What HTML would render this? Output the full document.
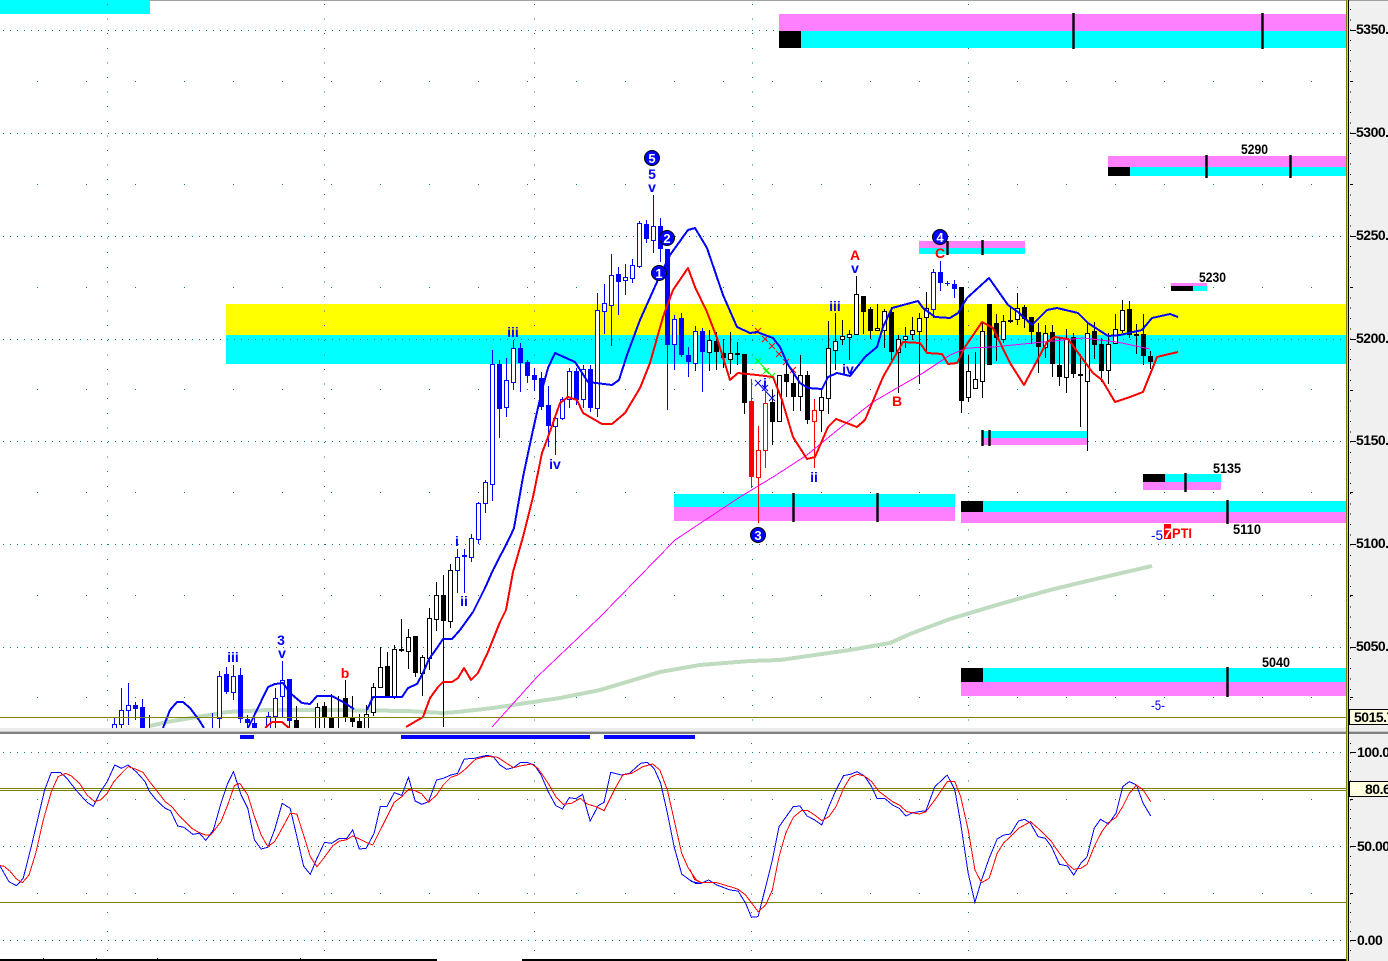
<!DOCTYPE html>
<html>
<head>
<meta charset="utf-8">
<style>
html,body{margin:0;padding:0;background:#fff;overflow:hidden}
svg{display:block}
text{font-family:"Liberation Sans",sans-serif}
.ax{font-size:14px;font-weight:bold;letter-spacing:-.5px;fill:#000}
.lb{font-size:14px;font-weight:bold;fill:#000}
.w{font-size:14px;font-weight:bold;text-anchor:middle;fill:#0000ff}
.r{fill:#ff0000}
.n{font-size:13px;font-weight:bold;text-anchor:middle;fill:#fff}
polyline{shape-rendering:crispEdges}
</style>
</head>
<body>
<svg width="1388" height="961" viewBox="0 0 1388 961" xmlns="http://www.w3.org/2000/svg">
<defs><clipPath id="c"><rect x="0" y="0" width="1346" height="728"/></clipPath></defs>
<rect width="1388" height="961" fill="#fff"/>
<rect x="1349" y="0" width="39" height="961" fill="#f0f0f0"/>
<rect x="0" y="0" width="1388" height="1" fill="#a0a0a0"/>

<!-- zones beneath grid -->
<g shape-rendering="crispEdges">
<rect x="0" y="0" width="150" height="14" fill="#00ffff"/>
<rect x="226" y="304" width="1120" height="31" fill="#ffff00"/>
<rect x="226" y="335" width="1120" height="29" fill="#00ffff"/>
</g>

<!-- grid -->
<g stroke="#008080" stroke-width="1" fill="none" shape-rendering="crispEdges">
<g stroke-dasharray="1 6">
<path d="M3 30.5H1346M3 133.5H1346M3 236.5H1346M3 339.5H1346M3 441.5H1346M3 544.5H1346M3 647.5H1346M3 752.5H1346M3 846.5H1346M3 940.5H1346"/>
</g>
<g stroke-dasharray="1 48">
<path d="M37 81.5H1346M37 184.5H1346M37 287.5H1346M37 389.5H1346M37 492.5H1346M37 595.5H1346M37 697.5H1346M37 799.5H1346M37 893.5H1346"/>
</g>
<g stroke-dasharray="1 13.6">
<path d="M107.5 4V728M324.5 4V728M534.5 4V728M752.5 4V728M968.5 4V728"/>
</g>
<g stroke-dasharray="1 17.8">
<path d="M107.5 743V958M324.5 743V958M534.5 743V958M751.5 743V958M968.5 743V958"/>
</g>
</g>

<!-- bands -->
<g shape-rendering="crispEdges">
<rect x="779" y="14" width="567" height="17" fill="#ff80ff"/>
<rect x="779" y="31" width="567" height="17" fill="#00ffff"/>
<rect x="779" y="31" width="22" height="17" fill="#000"/>
<rect x="1108" y="156" width="238" height="11" fill="#ff80ff"/>
<rect x="1108" y="167" width="238" height="9" fill="#00ffff"/>
<rect x="1108" y="167" width="22" height="9" fill="#000"/>
<rect x="919" y="241" width="106" height="7" fill="#ff80ff"/>
<rect x="919" y="248" width="106" height="6" fill="#00ffff"/>
<rect x="1171" y="283" width="36" height="3" fill="#ff80ff"/>
<rect x="1171" y="286" width="36" height="5" fill="#00ffff"/>
<rect x="1171" y="286" width="22" height="5" fill="#000"/>
<rect x="674" y="494" width="281" height="13" fill="#00ffff"/>
<rect x="674" y="507" width="281" height="14" fill="#ff80ff"/>
<rect x="983" y="431" width="104" height="7" fill="#00ffff"/>
<rect x="983" y="438" width="104" height="7" fill="#ff80ff"/>
<rect x="1143" y="474" width="78" height="8" fill="#00ffff"/>
<rect x="1143" y="482" width="78" height="8" fill="#ff80ff"/>
<rect x="1143" y="474" width="22" height="8" fill="#000"/>
<rect x="961" y="501" width="385" height="11" fill="#00ffff"/>
<rect x="961" y="512" width="385" height="11" fill="#ff80ff"/>
<rect x="961" y="501" width="22" height="11" fill="#000"/>
<rect x="961" y="668" width="385" height="14" fill="#00ffff"/>
<rect x="961" y="682" width="385" height="14" fill="#ff80ff"/>
<rect x="961" y="668" width="22" height="14" fill="#000"/>
</g>
<path fill="none" stroke="#000" stroke-width="2.4" d="M1073.5 13V49M1262.5 13V49M1206.5 155V178M1290.5 155V178M982.5 240V255M947.5 241V255M793.5 493V522M877.5 493V522M982.5 430V446M989.5 430V446M1185.5 473V492M1227.5 500V524M1227.5 667V697"/>

<g clip-path="url(#c)">
<!-- green MA -->
<polyline fill="none" stroke="#c0dcc0" stroke-width="4" points="150,726 167,722 197,717 227,712 267,710 333,710 407,711 443,713 457,712 493,708 513,705 560,698 600,690 660,672 700,665 750,661 780,660 850,650 890,643 910,634 950,619 1000,604 1050,590 1100,578 1152,566"/>

<g fill="none" shape-rendering="crispEdges">
<!-- blue candles -->
<path stroke="#0000ff" d="M114.5 718V728M121.5 688V728M128.5 683V725M135.5 702V720M142.5 699V728M149.5 715V728M212.5 713V728M219.5 671V728M226.5 667V694M233.5 665V700M240.5 668V723M247.5 715V728M254.5 718V728M268.5 712V728M275.5 688V728M282.5 661V718M289.5 679V728M457.5 549V593M464.5 549V593M471.5 534V562M478.5 502V544M485.5 480V513M492.5 350V501M499.5 360V438M506.5 358V417M513.5 340V390M520.5 343V392M527.5 360V383M534.5 368V391M541.5 372V410M548.5 386V447M555.5 414V455M562.5 397V420M569.5 368V408M576.5 368V405M583.5 365V408M590.5 365V412M597.5 293V417M604.5 284V334M611.5 254V346M618.5 267V315M625.5 264V295M632.5 259V283M639.5 221V268M646.5 220V243M653.5 195V253M660.5 218V262M667.5 249V410M674.5 315V370M681.5 313V357M688.5 347V377M695.5 326V371M702.5 328V392M933.5 269V318M940.5 261V291M947.5 281V286M954.5 280V298"/>
<path stroke="#0000ff" fill="#fff" d="M112.5 724.5h4V730h-4zM119.5 710.5h4V724.5h-4zM126.5 705.5h4V710.5h-4zM217.5 676.5h4V718.5h-4zM231.5 676.5h4V692.5h-4zM266.5 716.5h4V730h-4zM273.5 698.5h4V716.5h-4zM280.5 680.5h4V696.5h-4zM455.5 557.5h4V570.5h-4zM469.5 538.5h4V557.5h-4zM476.5 503.5h4V539.5h-4zM483.5 482.5h4V503.5h-4zM490.5 364.5h4V484.5h-4zM504.5 380.5h4V407.5h-4zM511.5 348.5h4V382.5h-4zM553.5 418.5h4V426.5h-4zM560.5 399.5h4V418.5h-4zM567.5 371.5h4V399.5h-4zM581.5 369.5h4V399.5h-4zM595.5 310.5h4V408.5h-4zM602.5 303.5h4V311.5h-4zM609.5 275.5h4V305.5h-4zM623.5 277.5h4V280.5h-4zM630.5 265.5h4V278.5h-4zM637.5 223.5h4V266.5h-4zM651.5 226.5h4V240.5h-4zM672.5 319.5h4V344.5h-4zM693.5 331.5h4V363.5h-4zM931.5 272.5h4V309.5h-4z"/>
<path stroke="#0000ff" stroke-width="5" d="M135.5 705V709M142.5 707V730M226.5 674V692M240.5 675V719M247.5 719V723M254.5 723V730M289.5 679V721M464.5 555V557M499.5 364V409M520.5 348V363M527.5 362V376M534.5 375V380M541.5 378V407M548.5 405V426M576.5 371V400M590.5 369V408M618.5 274V282M646.5 224V239M660.5 226V249M667.5 249V345M681.5 318V355M688.5 355V362M702.5 331V352M940.5 272V283M947.5 283V284M954.5 284V289"/>

<!-- black candles -->
<path stroke="#000" d="M296.5 706V728M317.5 703V728M324.5 702V728M331.5 694V728M338.5 696V728M345.5 680V722M352.5 696V727M359.5 714V728M366.5 705V728M373.5 683V716M380.5 647V687M387.5 652V698M394.5 645V699M401.5 619V652M408.5 629V669M415.5 636V677M422.5 655V696M429.5 608V670M436.5 582V631M443.5 575V727M450.5 564V628M709.5 330V371M716.5 332V370M723.5 339V368M730.5 332V374M737.5 342V365M744.5 354V414M772.5 390V445M779.5 375V421M786.5 360V397M793.5 370V411M800.5 355V411M807.5 371V424M821.5 390V432M828.5 321V414M835.5 313V370M842.5 320V345M849.5 330V360M856.5 276V334M863.5 296V334M870.5 307V339M877.5 304V330M884.5 309V348M891.5 307V360M898.5 335V393M905.5 327V348M912.5 317V340M919.5 313V384M926.5 292V353M961.5 287V413M968.5 355V402M975.5 352V388M982.5 322V398M989.5 304V365M996.5 314V361M1003.5 315V343M1010.5 307V323M1017.5 293V325M1024.5 305V328M1031.5 317V344M1038.5 323V373M1045.5 325V358M1052.5 325V377M1059.5 337V386M1066.5 329V393M1073.5 333V378M1080.5 354V427M1087.5 323V451M1094.5 322V359M1101.5 338V382M1108.5 333V384M1115.5 314V343M1122.5 300V333M1129.5 301V338M1136.5 324V354M1143.5 314V365M1150.5 351V369"/>
<path stroke="#000" fill="#fff" d="M315.5 707.5h4V730h-4zM364.5 714.5h4V730h-4zM371.5 687.5h4V712.5h-4zM378.5 667.5h4V687.5h-4zM392.5 649.5h4V697.5h-4zM406.5 637.5h4V651.5h-4zM420.5 657.5h4V673.5h-4zM427.5 618.5h4V658.5h-4zM434.5 595.5h4V619.5h-4zM448.5 570.5h4V621.5h-4zM707.5 340.5h4V352.5h-4zM728.5 353.5h4V359.5h-4zM777.5 375.5h4V421.5h-4zM798.5 375.5h4V396.5h-4zM819.5 397.5h4V410.5h-4zM826.5 348.5h4V398.5h-4zM833.5 341.5h4V350.5h-4zM840.5 336.5h4V339.5h-4zM847.5 334.5h4V337.5h-4zM854.5 294.5h4V334.5h-4zM875.5 328.5h4V330.5h-4zM882.5 311.5h4V330.5h-4zM896.5 339.5h4V352.5h-4zM903.5 336.5h4V339.5h-4zM910.5 330.5h4V334.5h-4zM917.5 318.5h4V331.5h-4zM924.5 308.5h4V317.5h-4zM966.5 371.5h4V397.5h-4zM973.5 379.5h4V388.5h-4zM980.5 331.5h4V381.5h-4zM1001.5 321.5h4V339.5h-4zM1015.5 308.5h4V319.5h-4zM1043.5 333.5h4V347.5h-4zM1064.5 338.5h4V377.5h-4zM1085.5 333.5h4V381.5h-4zM1106.5 344.5h4V370.5h-4zM1113.5 329.5h4V343.5h-4zM1120.5 310.5h4V330.5h-4z"/>
<path stroke="#000" stroke-width="5" d="M296.5 720V730M324.5 706V717M331.5 718V730M345.5 698V717M352.5 718V722M359.5 721V730M387.5 666V698M401.5 649V651M415.5 636V673M443.5 595V621M716.5 341V352M723.5 353V358M737.5 353V355M744.5 354V403M772.5 402V422M786.5 374V382M793.5 383V397M807.5 375V420M863.5 296V312M870.5 309V331M891.5 312V352M961.5 287V401M989.5 304V365M996.5 323V338M1010.5 320V322M1024.5 307V319M1031.5 317V332M1038.5 332V347M1052.5 332V364M1059.5 365V377M1073.5 337V374M1080.5 374V376M1094.5 331V345M1101.5 344V371M1129.5 309V335M1136.5 334V336M1143.5 334V356M1150.5 356V362"/>

<!-- red candles -->
<path stroke="#ff0000" d="M751.5 379V488M758.5 426V523M765.5 392V468M814.5 399V468"/>
<path stroke="#ff0000" fill="#fff" d="M756.5 450.5h4V477.5h-4zM763.5 403.5h4V450.5h-4zM812.5 410.5h4V421.5h-4z"/>
<path stroke="#ff0000" stroke-width="5" d="M751.5 401V477"/>
</g>

<!-- magenta MA -->
<polyline fill="none" stroke="#ff00ff" stroke-width="1" points="492,727 537,677 600,617 675,540 740,497 773,477 807,455 840,428 873,402 897,388 923,373 950,355 967,348 993,347 1033,343 1083,338 1117,342 1150,349"/>

<!-- x marks -->
<path fill="none" stroke="#ff0000" d="M755 328l6 6m0-6l-6 6M762 336l6 6m0-6l-6 6M769 343l6 6m0-6l-6 6M776 351l6 6m0-6l-6 6M783 359l6 6m0-6l-6 6M790 367l6 6m0-6l-6 6"/>
<path fill="none" stroke="#00ff00" d="M755 358l6 6m0-6l-6 6M763 368l6 6m0-6l-6 6M769 373l6 6m0-6l-6 6M758 361L772 376"/>
<path fill="none" stroke="#0000ff" d="M755 380l6 6m0-6l-6 6M762 385l6 6m0-6l-6 6M769 395l6 6m0-6l-6 6M758 383L772 398"/>

<!-- blue MA -->
<g fill="none" stroke="#0000ff" stroke-width="2" stroke-linejoin="round">
<polyline points="163,728 170,710 177,702 183,702 190,708 199,720 204,728"/>
<polyline points="248,728 255,714 268,687 275,684 283,683 290,693 302,703 310,704 317,696 332,696 343,702 354,709"/>
<polyline points="367,710 373,697 387,697 402,697 408,688 417,684 423,673 429,659 437,648 443,639 452,639 460,630 473,612 485,588 493,570 510,537 514,528 523,477 533,430 542,390 548,368 555,353 575,362 588,382 612,385 619,380 627,355 640,320 657,282 670,255 688,230 695,228 707,248 723,295 737,327 750,333 757,332 773,338 780,347 787,363 800,383 808,388 822,389 828,377 837,373 850,376 865,357 877,347 883,327 892,308 918,301 923,308 935,317 950,318 958,313 967,298 989,278 1008,305 1018,312 1032,325 1047,310 1057,308 1078,313 1088,323 1108,336 1120,335 1142,330 1152,318 1170,314 1178,317"/>
</g>
<!-- red MA -->
<g fill="none" stroke="#ff0000" stroke-width="2" stroke-linejoin="round">
<polyline points="265,728 272,722 282,722 289,728"/>
<polyline points="406,727 423,717 430,698 438,687 443,682 452,682 458,678 464,668 471,680 478,673 488,652 500,622 506,610 513,572 523,537 533,497 542,453 548,437 560,403 568,397 577,400 583,413 602,424 612,424 625,413 640,388 650,363 663,317 673,290 688,268 695,287 707,312 717,338 730,380 738,373 757,375 773,377 782,400 793,437 807,459 815,457 828,427 836,419 857,427 865,420 883,377 903,342 920,343 927,353 942,354 948,364 957,363 965,347 982,322 993,328 1010,363 1024,385 1047,342 1055,337 1068,339 1093,373 1102,380 1115,402 1130,397 1143,392 1157,357 1165,355 1178,352"/>
</g>
</g>

<!-- circles -->
<g stroke="#000" stroke-width="1" fill="#0000ff">
<circle cx="652" cy="158" r="7.5"/>
<circle cx="667" cy="238" r="7.5"/>
<circle cx="659" cy="273" r="7.5"/>
<circle cx="940" cy="237" r="7.5"/>
<circle cx="758" cy="535" r="7.5"/>
</g>
<text class="n" x="652" y="163">5</text>
<text class="n" x="667" y="243">2</text>
<text class="n" x="659" y="278">1</text>
<text class="n" x="940" y="242">4</text>
<text class="n" x="758" y="540">3</text>

<!-- wave labels -->
<text class="w" x="233" y="662">iii</text>
<text class="w" x="281" y="645">3</text>
<text class="w" x="282" y="658">v</text>
<text class="w r" x="345" y="678">b</text>
<text class="w" x="457" y="546">i</text>
<text class="w" x="464" y="606">ii</text>
<text class="w" x="513" y="337">iii</text>
<text class="w" x="555" y="469">iv</text>
<text class="w" x="652" y="179">5</text>
<text class="w" x="652" y="192">v</text>
<text class="w r" x="855" y="260">A</text>
<text class="w" x="855" y="273">v</text>
<text class="w" x="835" y="311">iii</text>
<text class="w" x="848" y="374">iv</text>
<text class="w" x="814" y="482">ii</text>
<text class="w r" x="897" y="406">B</text>
<text class="w r" x="940" y="258">C</text>
<text class="w" x="765" y="388">i</text>

<!-- price labels -->
<text class="lb" x="1241" y="154" textLength="27" lengthAdjust="spacingAndGlyphs">5290</text>
<text class="lb" x="1199" y="282" textLength="27" lengthAdjust="spacingAndGlyphs">5230</text>
<text class="lb" x="1213" y="473" textLength="28" lengthAdjust="spacingAndGlyphs">5135</text>
<text class="lb" x="1233" y="534" textLength="28" lengthAdjust="spacingAndGlyphs">5110</text>
<text class="lb" x="1262" y="667" textLength="28" lengthAdjust="spacingAndGlyphs">5040</text>
<text x="1151" y="710" font-size="14" fill="#0000ff" textLength="14" lengthAdjust="spacingAndGlyphs">-5-</text>
<text x="1151" y="540" font-size="14" fill="#0000ff" textLength="12" lengthAdjust="spacingAndGlyphs">-5</text>
<rect x="1164" y="524" width="7" height="15" fill="#ff0000" shape-rendering="crispEdges"/>
<text x="1164" y="538" font-size="14" font-weight="bold" font-style="italic" fill="#fff">7</text>
<text x="1172" y="538" font-size="14" font-weight="bold" fill="#ff0000" textLength="20" lengthAdjust="spacingAndGlyphs">PTI</text>

<!-- bottom bars -->
<g shape-rendering="crispEdges">
<rect x="0" y="728" width="1388" height="3" fill="#ececec"/>
<rect x="0" y="731" width="1388" height="1" fill="#c8c8c8"/>
<rect x="0" y="732" width="1388" height="2" fill="#808080"/>
<rect x="240" y="735" width="14" height="4" fill="#0000ff"/>
<rect x="401" y="735" width="189" height="4" fill="#0000ff"/>
<rect x="604" y="735" width="91" height="4" fill="#0000ff"/>
<path fill="none" stroke="#808000" d="M0 717.5H1347M0 788.5H1347M0 790.5H1347M0 902.5H1347"/>
</g>

<!-- stochastic -->
<g fill="none" stroke-width="1">
<g transform="translate(0,740) scale(.44643,.33333)">
<polyline vector-effect="non-scaling-stroke" stroke="#0000ff" points="0,378 20,425 37,437 52,415 70,320 100,150 115,97 135,97 150,115 170,150 195,187 209,199 225,155 240,125 257,75 272,85 287,75 305,95 325,125 335,155 350,180 370,205 382,212 398,258 412,262 432,283 447,280 461,301 478,270 495,190 510,130 523,95 540,165 555,205 570,300 585,327 600,322 615,270 632,190 650,205 665,290 680,378 695,403 710,355 727,307 743,310 760,295 777,295 790,270 805,327 820,325 838,280 852,199 867,199 883,158 900,166 915,112 930,183 945,193 960,185 978,120 993,115 1010,105 1025,100 1040,57 1062,55 1090,46 1105,50 1120,75 1135,88 1150,83 1165,68 1180,67 1197,75 1212,105 1228,155 1245,197 1260,207 1275,173 1290,176 1305,163 1322,243 1340,197 1353,187 1368,97 1392,105 1410,100 1435,70 1450,67 1465,85 1480,130 1495,220 1510,320 1527,402 1550,425 1568,430"/>
<polyline vector-effect="non-scaling-stroke" stroke="#ff0000" points="0,377 8,378 22,393 37,417 50,428 65,405 80,340 97,240 115,155 130,110 147,100 160,108 178,130 195,165 212,185 225,180 240,160 255,125 272,100 287,80 305,88 320,97 335,125 350,150 370,185 385,200 400,225 430,265 445,277 460,285 472,285 495,245 510,195 525,137 537,130 555,165 570,230 585,285 600,320 615,305 632,265 650,220 665,222 680,285 695,350 710,380 725,355 745,318 760,303 775,300 790,288 805,297 820,307 835,315 850,275 867,230 883,187 900,170 915,148 930,152 945,162 960,187 978,165 993,135 1010,112 1025,105 1040,90 1065,58 1090,49 1115,52 1135,70 1150,83 1165,78 1190,72 1205,85 1228,130 1245,170 1262,193 1280,190 1300,175 1315,192 1335,200 1353,212 1378,145 1395,105 1415,100 1440,80 1462,72 1478,90 1495,150 1510,240 1527,340 1542,385 1560,420 1568,425"/>
</g>
<g transform="translate(690,740) scale(.44515,.33333)">
<polyline vector-effect="non-scaling-stroke" stroke="#0000ff" points="0,420 12,430 25,430 42,420 60,435 90,450 108,453 125,490 138,532 153,530 170,440 185,360 200,260 232,200 247,198 263,228 280,240 296,255 312,200 328,150 345,107 360,103 375,95 392,108 408,140 420,175 437,175 455,195 470,205 485,228 500,218 530,212 550,140 578,105 595,150 608,250 625,400 640,487 655,420 672,355 690,297 705,285 720,282 738,243 752,238 765,250 782,290 798,295 812,320 830,373 848,378 862,405 878,370 892,350 908,265 922,238 940,252 957,220 972,140 987,125 1003,135 1018,190 1035,228"/>
<polyline vector-effect="non-scaling-stroke" stroke="#ff0000" points="0,388 10,418 25,428 60,428 90,440 108,448 125,465 153,515 170,495 185,450 200,350 215,280 232,232 250,212 265,212 280,225 296,242 312,230 328,200 345,145 360,112 375,103 392,108 408,125 425,155 455,185 470,195 487,215 515,222 530,215 550,180 578,125 595,125 608,170 625,270 640,390 655,428 672,415 690,340 705,308 720,290 738,265 765,245 782,265 798,285 812,305 830,340 848,372 862,388 878,385 892,373 908,320 925,275 940,248 957,232 972,200 987,160 1003,135 1018,150 1035,185"/>
</g>
</g>

<!-- bottom time axis -->
<g shape-rendering="crispEdges" fill="#000">
<rect x="0" y="959" width="437" height="2"/>
<rect x="522" y="959" width="826" height="2"/>
<rect x="43" y="958" width="1" height="3"/>
<rect x="96" y="958" width="1" height="3"/>
<rect x="157" y="958" width="1" height="3"/>
<rect x="300" y="958" width="1" height="3"/>
</g>

<!-- right axis -->
<g shape-rendering="crispEdges">
<rect x="1346" y="0" width="1" height="961" fill="#808000"/>
<rect x="1347" y="0" width="1" height="961" fill="#c8c890"/>
<rect x="1348" y="0" width="1" height="961" fill="#000"/>
<g fill="none" stroke="#000">
<path stroke-dasharray="1 9.3" d="M1350.5 9V728"/>
<path stroke-dasharray="1 8.4" d="M1350.5 743V958"/>
<path d="M1350 30.5h6M1350 133.5h6M1350 236.5h6M1350 339.5h6M1350 441.5h6M1350 544.5h6M1350 647.5h6M1350 81.5h3M1350 184.5h3M1350 287.5h3M1350 390.5h3M1350 492.5h3M1350 595.5h3M1350 697.5h3M1350 752.5h6M1350 846.5h6M1350 940.5h6M1350 799.5h3M1350 893.5h3"/>
</g>
</g>
<text class="ax" x="1356" y="34">5350.</text>
<text class="ax" x="1356" y="137">5300.</text>
<text class="ax" x="1356" y="240">5250.</text>
<text class="ax" x="1356" y="343">5200.</text>
<text class="ax" x="1356" y="445">5150.</text>
<text class="ax" x="1356" y="548">5100.</text>
<text class="ax" x="1356" y="651">5050.</text>
<text class="ax" x="1357" y="757">100.00</text>
<text class="ax" x="1357" y="851">50.00</text>
<text class="ax" x="1357" y="945">0.00</text>
<rect x="1349.5" y="709.5" width="40" height="15" fill="#ffffe1" stroke="#000"/>
<text class="ax" x="1354" y="722">5015.7</text>
<rect x="1349.5" y="781.5" width="40" height="15" fill="#ffffe1" stroke="#000"/>
<text class="ax" x="1365" y="794">80.6</text>
</svg>
</body>
</html>
